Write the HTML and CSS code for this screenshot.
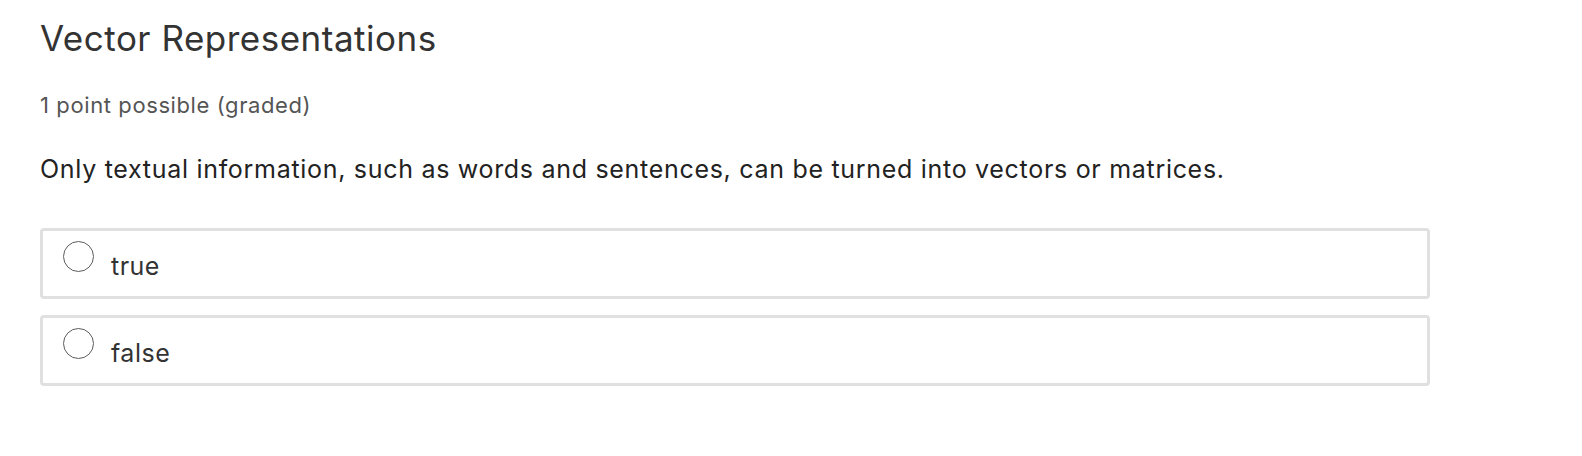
FILE: index.html
```html
<!DOCTYPE html>
<html>
<head>
<meta charset="utf-8">
<link rel="stylesheet" href="styles.css">
</head>
<body>
<div class="problem">
  <h2 class="title">Vector Representations</h2>
  <div class="points">1 point possible (graded)</div>
  <p class="question">Only textual information, such as words and sentences, can be turned into vectors or matrices.</p>
  <div class="choices">
    <label class="choice"><span class="radio"></span><span class="label-text">true</span></label>
    <label class="choice"><span class="radio"></span><span class="label-text">false</span></label>
  </div>
</div>
</body>
</html>
```
FILE: styles.css
```css
html, body {
  margin: 0;
  padding: 0;
  background: #fff;
  font-family: Inter, "Noto Sans", sans-serif;
}
.problem {
  padding: 17px 0 0 40px;
}
.title {
  margin: 0;
  font-size: 35px;
  font-weight: 400;
  color: #333;
  line-height: 42px;
  letter-spacing: 0.5px;
}
.points {
  margin-top: 33px;
  font-size: 22px;
  color: #555;
  line-height: 26px;
  letter-spacing: 0.6px;
}
.question {
  margin: 36px 0 0 0;
  font-size: 25px;
  line-height: 30px;
  color: #222;
  letter-spacing: 0.7px;
}
.choices {
  margin-top: 44px;
  width: 1390px;
  display: flex;
  flex-direction: column;
  gap: 16px;
}
.choice {
  display: flex;
  align-items: flex-start;
  border: 3px solid #e0e0e0;
  border-radius: 4px;
  padding: 10px 20px 15px 20px;
}
.radio {
  width: 31px;
  height: 31px;
  border: 1.6px solid #5c5c5c;
  border-radius: 50%;
  flex: none;
  box-sizing: border-box;
}
.label-text {
  margin-left: 17px;
  margin-top: 10px;
  font-size: 25px;
  line-height: 30px;
  color: #333;
  letter-spacing: 0.5px;
}
```
